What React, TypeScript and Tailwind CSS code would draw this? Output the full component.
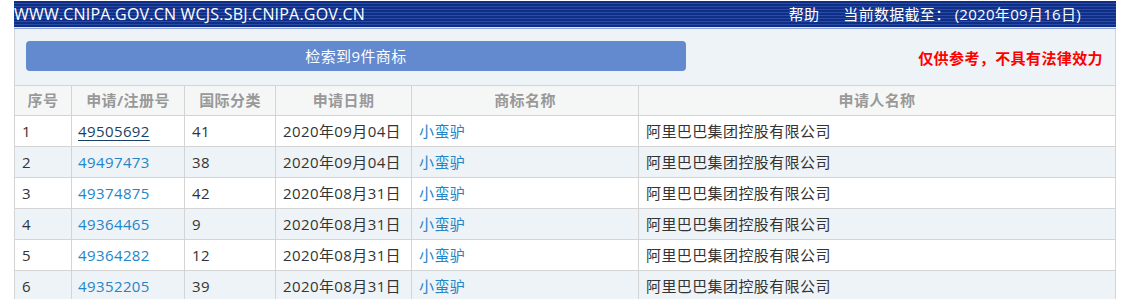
const rows = [
  { no: 1, reg: "49505692", cls: "41", date: "2020年09月04日", hover: true },
  { no: 2, reg: "49497473", cls: "38", date: "2020年09月04日" },
  { no: 3, reg: "49374875", cls: "42", date: "2020年08月31日" },
  { no: 4, reg: "49364465", cls: "9", date: "2020年08月31日" },
  { no: 5, reg: "49364282", cls: "12", date: "2020年08月31日" },
  { no: 6, reg: "49352205", cls: "39", date: "2020年08月31日" },
];

const font = "font-['Open_Sans','Noto_Sans_CJK_SC',sans-serif]";

export default function App() {
  return (
    <div className={`h-[299px] overflow-hidden bg-white ${font}`}>
      <div className="ml-[14px] w-[1102px] pt-[1px]">
        <div className="flex h-[26px] items-center justify-between bg-[repeating-linear-gradient(to_bottom,#0e2e88_0px,#0e2e88_2px,#2a4ca4_2px,#2a4ca4_3px)] pr-[35px] text-[16px] tracking-[0.2px] text-white">
          <span>WWW.CNIPA.GOV.CN WCJS.SBJ.CNIPA.GOV.CN</span>
          <div className="flex gap-[24px] text-[15px] tracking-[0.3px]">
            <span>帮助</span>
            <span>当前数据截至： (2020年09月16日)</span>
          </div>
        </div>
        <div className="h-[1px] bg-[#dfe6f3]" />
        <div className="h-[1px] bg-[#8ea5d6]" />
        <div className="flex h-[56px] items-start justify-between border-x border-[#d4d4d4] bg-[#eef3f7] pl-[11px] pr-[12px] pt-[12px]">
          <div className="flex h-[30px] w-[660px] items-center justify-center rounded-[4px] bg-[#6389cf] text-[15px] tracking-[0.4px] text-white">
            检索到9件商标
          </div>
          <span className="mt-[6px] text-[15px] font-bold tracking-[0.4px] text-[#ff0000]">
            仅供参考，不具有法律效力
          </span>
        </div>
        <table className="w-[1102px] table-fixed border-collapse text-[15px] tracking-[0.4px] text-[#333]">
          <colgroup>
            <col className="w-[57px]" />
            <col className="w-[113px]" />
            <col className="w-[91px]" />
            <col className="w-[136px]" />
            <col className="w-[227px]" />
            <col />
          </colgroup>
          <thead>
            <tr className="h-[30px] bg-[#f5f7f7] text-[15px] font-bold text-[#999]">
              {["序号", "申请/注册号", "国际分类", "申请日期", "商标名称", "申请人名称"].map((h) => (
                <th key={h} className="border border-[#d4d4d4] text-center font-bold">
                  {h}
                </th>
              ))}
            </tr>
          </thead>
          <tbody>
            {rows.map((r, i) => (
              <tr key={r.no} className={`h-[31px] ${i % 2 === 1 ? "bg-[#eef3f7]" : "bg-white"}`}>
                <td className="border border-[#d4d4d4] px-[7px]">{r.no}</td>
                <td className="border border-[#d4d4d4] px-[6px]">
                  {r.hover ? (
                    <span className="text-[#1b3f66] underline underline-offset-[3px]">{r.reg}</span>
                  ) : (
                    <span className="text-[#2385c8]">{r.reg}</span>
                  )}
                </td>
                <td className="border border-[#d4d4d4] px-[7px]">{r.cls}</td>
                <td className="border border-[#d4d4d4] px-[7px]">{r.date}</td>
                <td className="border border-[#d4d4d4] px-[7px] text-[#2385c8]">小蛮驴</td>
                <td className="border border-[#d4d4d4] px-[7px]">阿里巴巴集团控股有限公司</td>
              </tr>
            ))}
          </tbody>
        </table>
      </div>
    </div>
  );
}
